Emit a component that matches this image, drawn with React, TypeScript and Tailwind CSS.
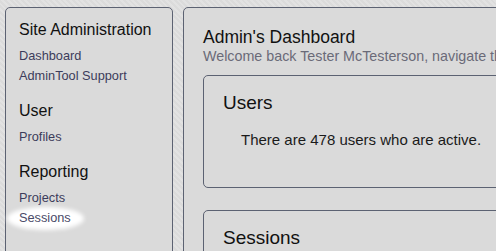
const SECTIONS = [
  { title: "Site Administration", links: ["Dashboard", "AdminTool Support"] },
  { title: "User", links: ["Profiles"] },
  { title: "Reporting", links: ["Projects", "Sessions"] },
];

function Sidebar() {
  return (
    <aside className="h-[300px] w-[168px] shrink-0 rounded-[5px] border border-[#5c6272] bg-[#dadada] pl-[13px] pt-[12px]">
      {SECTIONS.map((s, i) => (
        <div key={s.title} className={i > 0 ? "mt-[15px]" : ""}>
          <h2 className="mb-[6px] text-[16px] leading-[20px] text-[#111]">{s.title}</h2>
          <ul>
            {s.links.map((l) => (
              <li key={l} className="text-[12.75px] leading-[20px]">
                {l === "Sessions" ? (
                  <span className="relative inline-block">
                    <span className="absolute -left-[12px] -right-[13px] -top-[1px] -bottom-[2px] rounded-[50%] bg-white blur-[2px]" />
                    <span className="relative text-[#4a4a68]">{l}</span>
                  </span>
                ) : (
                  <span className="text-[#3c3c5a]">{l}</span>
                )}
              </li>
            ))}
          </ul>
        </div>
      ))}
    </aside>
  );
}

function Card({ title, children }: { title: string; children?: React.ReactNode }) {
  return (
    <section className="w-[400px] rounded-[5px] border border-[#5c6272] bg-[#dadada] pl-[19px] pt-[16px] pb-[38px]">
      <h3 className="text-[19px] leading-[22px] text-[#111]">{title}</h3>
      {children}
    </section>
  );
}

export default function App() {
  return (
    <div
      className="flex h-[251px] w-[496px] gap-[10px] overflow-hidden bg-[repeating-linear-gradient(45deg,#dbdbdb_0px,#dbdbdb_2px,#e2e2e2_2px,#e2e2e2_4px)] pl-[5px] pt-[7px]"
      style={{ fontFamily: '"Liberation Sans", Arial, sans-serif' }}
    >
      <Sidebar />
      <main className="h-[300px] w-[400px] shrink-0 rounded-[5px] border border-[#5c6272] bg-[#dadada] pl-[19px] pt-[19px]">
        <h1 className="text-[17.5px] leading-[20px] text-[#111]">Admin's Dashboard</h1>
        <p className="whitespace-nowrap text-[14.3px] leading-[18px] text-[#6a6a78]">
          Welcome back Tester McTesterson, navigate the admin tools using the menu on the left.
        </p>
        <div className="mt-[10px]">
          <Card title="Users">
            <p className="ml-[18px] mt-[17px] text-[15px] leading-[18px] text-[#1a1a1a]">
              There are 478 users who are active.
            </p>
          </Card>
          <div className="mt-[22px]">
            <Card title="Sessions" />
          </div>
        </div>
      </main>
    </div>
  );
}
